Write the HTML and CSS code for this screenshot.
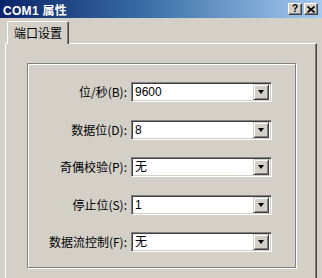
FILE: index.html
```html
<!DOCTYPE html>
<html lang="zh-CN">
<head>
    <meta charset="UTF-8">
    <title>COM1 属性</title>
    <link rel="stylesheet" href="styles.css">
</head>
<body>
    <div class="window">
        <div class="titlebar">
            <span class="title">COM1 属性</span>
            <div class="caption-btns">
                <span class="cbtn">?</span>
                <span class="cbtn">
                    <svg width="8" height="7" viewBox="0 0 8 7">
                        <path d="M0.5 0.5 L7.5 6.5 M7.5 0.5 L0.5 6.5" stroke="#000" stroke-width="1.6"/>
                    </svg>
                </span>
            </div>
        </div>

        <div class="content">
            <div class="tabs">
                <div class="tab active">端口设置</div>
            </div>

            <div class="panel">
                <div class="group">
                    <div class="form">
                        <label>位/秒(B):</label>
                        <div class="combo"><span class="value">9600</span><span class="arrow"></span></div>

                        <label>数据位(D):</label>
                        <div class="combo"><span class="value">8</span><span class="arrow"></span></div>

                        <label>奇偶校验(P):</label>
                        <div class="combo"><span class="value">无</span><span class="arrow"></span></div>

                        <label>停止位(S):</label>
                        <div class="combo"><span class="value">1</span><span class="arrow"></span></div>

                        <label>数据流控制(F):</label>
                        <div class="combo"><span class="value">无</span><span class="arrow"></span></div>
                    </div>
                </div>
            </div>
        </div>
    </div>
</body>
</html>
```

FILE: styles.css
```css
* {
    margin: 0;
    padding: 0;
    box-sizing: border-box;
}

body {
    font-family: "Liberation Sans", "Noto Sans CJK SC", sans-serif;
    font-size: 12px;
    background: #d4d0c8;
    color: #000;
}

.window {
    width: 322px;
    height: 278px;
    background: #d4d0c8;
    overflow: hidden;
}

/* Title bar */
.titlebar {
    height: 18px;
    display: flex;
    align-items: center;
    justify-content: space-between;
    padding: 0 4px 0 3px;
    background: linear-gradient(90deg, #0a246a 0%, #3a6ea5 45%, #a6caf0 100%);
}

.title {
    color: #fff;
    font-weight: bold;
    font-size: 12px;
    letter-spacing: 0.3px;
    font-family: "Liberation Sans", "Noto Sans CJK SC", sans-serif;
}

.caption-btns {
    display: flex;
    gap: 2px;
}

.cbtn {
    width: 14px;
    height: 12px;
    display: flex;
    align-items: center;
    justify-content: center;
    background: #d4d0c8;
    font-weight: bold;
    font-size: 10px;
    line-height: 1;
    border-top: 1px solid #fff;
    border-left: 1px solid #fff;
    border-right: 1px solid #404040;
    border-bottom: 1px solid #404040;
    box-shadow: inset -1px -1px 0 #808080;
}

/* Tabs */
.content {
    padding: 3px 0 0 5px;
}

.tabs {
    display: flex;
    padding-left: 2px;
}

.tab {
    position: relative;
    z-index: 1;
    height: 23px;
    margin-bottom: -1px;
    padding: 4px 6px 0 6px;
    width: 62px;
    font-family: "Noto Sans CJK SC", sans-serif;
    font-size: 12px;
    line-height: 14px;
    background: #d4d0c8;
    border-top: 1px solid #fff;
    border-left: 1px solid #fff;
    border-right: 1px solid #404040;
    box-shadow: inset -1px 0 0 #808080;
    border-radius: 2px 2px 0 0;
}

.panel {
    width: 312px;
    height: 240px;
    padding: 19px 0 0 21px;
    border-top: 1px solid #fff;
    border-left: 1px solid #fff;
    border-right: 1px solid #404040;
    border-bottom: 1px solid #404040;
    box-shadow: inset -1px -1px 0 #808080;
}

/* Group box */
.group {
    width: 269px;
    height: 205px;
    border: 1px solid #808080;
    box-shadow: inset 1px 1px 0 #fff, 1px 1px 0 #fff;
    padding: 18px 0 0 0;
}

.form {
    display: grid;
    grid-template-columns: 99px 141px;
    column-gap: 4px;
    row-gap: 17.5px;
    align-items: center;
}

.form label {
    text-align: right;
    font-family: "Noto Sans CJK SC", sans-serif;
    font-size: 12px;
    line-height: 14px;
}

/* Combo box */
.combo {
    height: 20px;
    display: flex;
    align-items: center;
    justify-content: space-between;
    background: #fff;
    border-top: 1px solid #808080;
    border-left: 1px solid #808080;
    border-right: 1px solid #fff;
    border-bottom: 1px solid #fff;
    box-shadow: inset 1px 1px 0 #404040, inset -1px -1px 0 #d4d0c8;
    padding: 2px 2px 2px 3px;
}

.value {
    font-family: "Liberation Sans", "Noto Sans CJK SC", sans-serif;
    font-size: 12px;
    line-height: 14px;
}

.arrow {
    width: 16px;
    height: 16px;
    background: #d4d0c8;
    border-top: 1px solid #d4d0c8;
    border-left: 1px solid #d4d0c8;
    border-right: 1px solid #404040;
    border-bottom: 1px solid #404040;
    box-shadow: inset 1px 1px 0 #fff, inset -1px -1px 0 #808080;
    display: flex;
    align-items: center;
    justify-content: center;
}

.arrow::after {
    content: "";
    width: 0;
    height: 0;
    border-left: 3.5px solid transparent;
    border-right: 3.5px solid transparent;
    border-top: 4px solid #000;
}
```
